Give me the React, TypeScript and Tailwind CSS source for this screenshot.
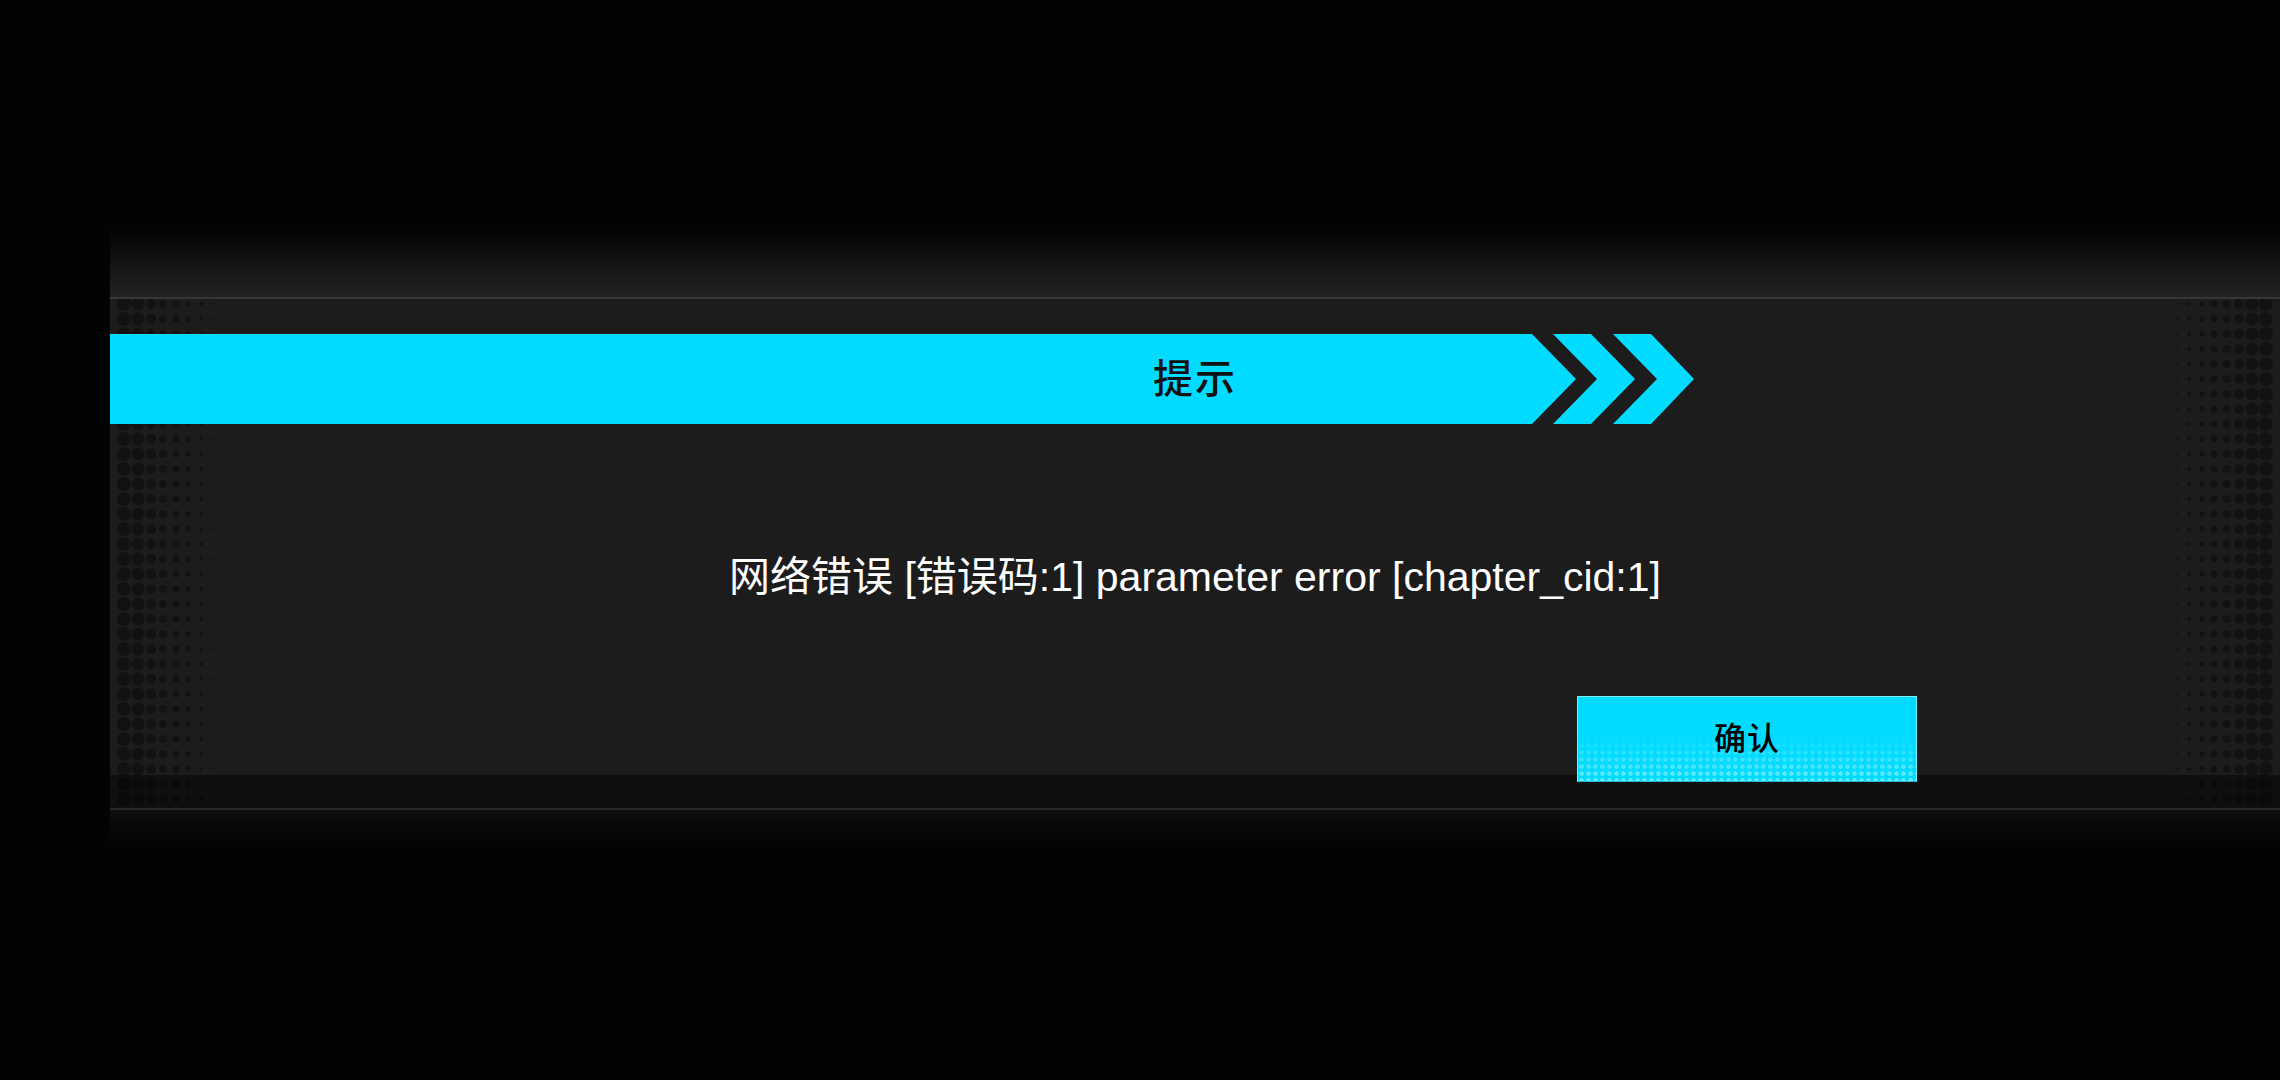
import React from "react";

const FONT = '"Liberation Sans", "Noto Sans CJK SC", sans-serif';

function DotColumn({ side }: { side: "left" | "right" }) {
  const leftCols = [
    { x: 14, r: 7 },
    { x: 28, r: 6.5 },
    { x: 41, r: 5 },
    { x: 53, r: 4 },
    { x: 66, r: 3.5 },
    { x: 78, r: 2.7 },
    { x: 91, r: 2 },
    { x: 103, r: 1.2 },
  ];
  const cols =
    side === "left"
      ? leftCols
      : leftCols.map((c) => ({ x: 110 - c.x, r: c.r })).reverse();
  const rows: number[] = [];
  for (let y = 5; y < 515; y += 15) rows.push(y);
  return (
    <svg
      width="110"
      height="509"
      viewBox="0 0 110 509"
      className={
        side === "left"
          ? "absolute left-0 top-0 pointer-events-none"
          : "absolute right-0 top-0 pointer-events-none"
      }
    >
      {rows.map((y) =>
        cols.map((c) => (
          <circle key={`${y}-${c.x}`} cx={c.x} cy={y} r={c.r} fill="#000" fillOpacity={0.33} />
        ))
      )}
    </svg>
  );
}

export default function App() {
  return (
    <div
      className="w-[2280px] h-[1080px] bg-[#030303] overflow-hidden flex pt-[225px]"
      style={{ fontFamily: FONT }}
    >
      <div className="w-[110px] shrink-0" />
      <div className="flex-1 flex flex-col">
        {/* top fade */}
        <div className="h-[72px] bg-gradient-to-b from-[#030303] via-[#121212] to-[#232323]" />
        <div className="h-[2px] bg-[#363636]" />
        {/* body + band */}
        <div className="relative">
          <DotColumn side="left" />
          <DotColumn side="right" />
          <div className="h-[476px] bg-[#1c1c1c]">
            <div className="relative z-10 flex flex-col">
              {/* title bar */}
              <div className="relative mt-[35px] h-[90px] flex">
                <div className="w-[1422px] h-[90px] bg-[#00dbff]" />
                <svg width="162" height="90" viewBox="0 0 162 90" className="block">
                  <polygon points="0,0 44,45 0,90" fill="#00dbff" />
                  <polygon points="21,0 59,0 103,45 59,90 21,90 65,45" fill="#00dbff" />
                  <polygon points="81,0 119,0 162,45 119,90 81,90 125,45" fill="#00dbff" />
                </svg>
                <div className="absolute inset-0 flex items-center justify-center">
                  <span className="text-[40px] leading-none text-[#111] font-medium tracking-[2px]">提示</span>
                </div>
              </div>
              {/* message */}
              <div className="mt-[131px] h-[44px] flex items-center justify-center">
                <span className="text-[41px] leading-[44px] text-white whitespace-nowrap">
                  网络错误 [错误码:1] parameter error [chapter_cid:1]
                </span>
              </div>
              {/* button */}
              <div className="mt-[97px] flex pl-[1467px]">
                <button className="relative w-[340px] h-[86px] bg-[#00dbff] border border-[#7eeeff] border-b-[#22b8d6] flex items-center justify-center overflow-hidden">
                  <div className="absolute inset-x-0 bottom-0 h-[55%] bg-[radial-gradient(circle,rgba(140,240,255,0.75)_2px,transparent_2.6px)] bg-[length:7px_7px] [mask-image:linear-gradient(to_bottom,transparent,black)]" />
                  <span className="relative text-[32px] leading-none text-black font-medium tracking-[1px]">
                    确认
                  </span>
                </button>
              </div>
            </div>
          </div>
          <div className="h-[33px] bg-[#0f0f0f]" />
        </div>
        <div className="h-[2px] bg-[#262626]" />
        <div className="h-[36px] bg-gradient-to-b from-[#0e0e0e] to-[#030303]" />
      </div>
    </div>
  );
}
